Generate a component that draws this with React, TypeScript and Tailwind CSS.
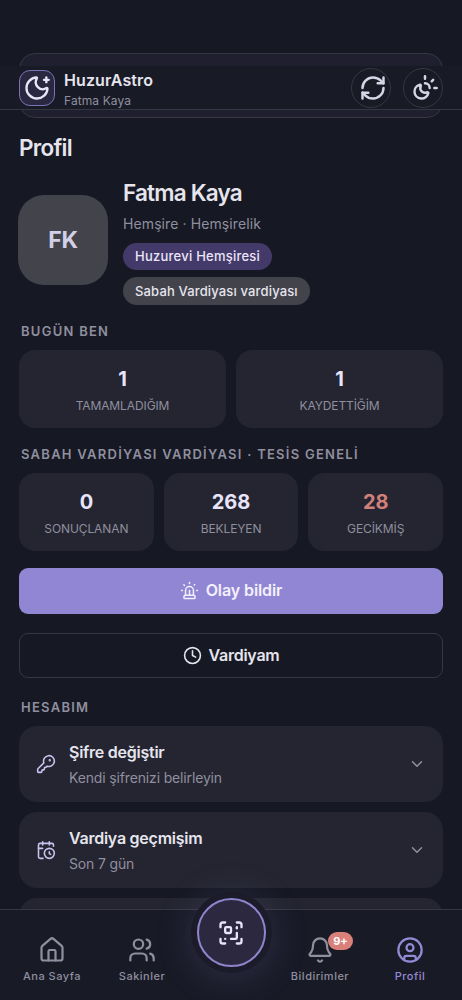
import type { LucideIcon } from "lucide-react";
import {
  Bell,
  CalendarClock,
  ChevronDown,
  CircleUser,
  Clock,
  House,
  KeyRound,
  MoonStar,
  RefreshCw,
  ScanQrCode,
  Siren,
  SunMoon,
  Users,
} from "lucide-react";

const todayStats = [
  { value: "1", label: "TAMAMLADIĞIM" },
  { value: "1", label: "KAYDETTİĞİM" },
];

const shiftStats = [
  { value: "0", label: "SONUÇLANAN" },
  { value: "268", label: "BEKLEYEN" },
  { value: "28", label: "GECİKMİŞ", late: true },
];

const accountItems = [
  { icon: KeyRound, title: "Şifre değiştir", text: "Kendi şifrenizi belirleyin" },
  { icon: CalendarClock, title: "Vardiya geçmişim", text: "Son 7 gün" },
];

const SectionTitle = ({ children }: { children: string }) => (
  <h3 className="pl-[2px] text-[13px] leading-4 font-semibold tracking-[1.26px] text-[#908f9f] whitespace-nowrap">
    {children}
  </h3>
);

const StatCard = ({ value, label, late }: { value: string; label: string; late?: boolean }) => (
  <div className="flex h-[78px] flex-col items-center rounded-2xl bg-[#242530] pt-[15px]">
    <span
      className={
        late
          ? "text-[20px] leading-7 font-bold tracking-[-0.1px] text-[#d17f7b]"
          : "text-[20px] leading-7 font-bold tracking-[-0.1px] text-[#e8e4fa]"
      }
    >
      {value}
    </span>
    <span className="mt-[5px] text-[12px] leading-4 tracking-[-0.1px] text-[#908f9f]">{label}</span>
  </div>
);

const NavItem = ({ icon: Icon, label, badge, active }: { icon: LucideIcon; label: string; badge?: string; active?: boolean }) => (
  <a className={active ? "flex flex-col items-center text-[#958ad5]" : "flex flex-col items-center text-[#908f9f]"}>
    <span className="relative">
      <Icon size={28} strokeWidth={1.9} />
      {badge && (
        <span className="absolute -top-[4px] left-[22px] flex h-[18px] w-[25px] items-center justify-center rounded-full bg-[#d9807b] text-[11px] font-bold text-white">
          {badge}
        </span>
      )}
    </span>
    <span className="mt-[4px] text-[11px] leading-4 font-medium tracking-[0.5px] whitespace-nowrap">{label}</span>
  </a>
);

const Header = () => (
  <header className="absolute inset-x-0 top-[66px] flex h-[44px] items-center border-b border-[#363743] bg-[#181a26] px-[19px]">
    <div className="flex size-[36px] items-center justify-center rounded-[11px] border border-[#7c73b5] bg-[#2a2840] text-[#e8e4fa]">
      <MoonStar size={28} strokeWidth={2} />
    </div>
    <div className="ml-[9px] flex flex-col pt-[5px]">
      <span className="text-[16px] leading-[21px] font-semibold tracking-[0.1px] text-[#e6e5ee]">HuzurAstro</span>
      <span className="text-[12px] leading-[19px] tracking-[0.1px] text-[#908f9f]">Fatma Kaya</span>
    </div>
    <div className="ml-auto flex gap-[12px] text-[#d4d6e6]">
      <button className="flex size-[40px] items-center justify-center rounded-full border border-[#363743] pl-[4px]">
        <RefreshCw size={28} strokeWidth={2.1} />
      </button>
      <button className="flex size-[40px] items-center justify-center rounded-full border border-[#363743] pl-[4px]">
        <SunMoon size={28} strokeWidth={2.1} />
      </button>
    </div>
  </header>
);

const BottomNav = () => (
  <nav className="absolute inset-x-0 bottom-0 grid h-[91px] grid-cols-[104px_76px_102px_76px_104px] border-t border-[#363743] bg-[#181a26] pt-[26px]">
    <NavItem icon={House} label="Ana Sayfa" />
    <NavItem icon={Users} label="Sakinler" />
    <div className="flex justify-center">
      <button className="-mt-[38px] flex size-[69px] items-center justify-center rounded-full border-2 border-[#8f85cd] bg-[#2b283f] text-[#e8e4fa] shadow-[0_0_0_6px_#1b1b29,0_4px_36px_8px_rgba(143,133,205,0.18)]">
        <ScanQrCode size={28} />
      </button>
    </div>
    <NavItem icon={Bell} label="Bildirimler" badge="9+" />
    <NavItem icon={CircleUser} label="Profil" active />
  </nav>
);

const App = () => {
  return (
    <div className="relative h-[1000px] w-[462px] overflow-hidden bg-[#161823] font-['Inter',sans-serif] text-[#e6e5ee]">
      <main className="px-[19px] pt-[53px]">
        <div className="h-[65px] rounded-2xl border border-[#363743] bg-[#201f30]" />

        <h1 className="mt-[15px] text-[22.5px] leading-[30px] font-semibold tracking-[-0.75px]">Profil</h1>

        {/* Kimlik */}
        <section className="mt-[15px] flex items-start gap-[15px]">
          <div className="mt-[17px] -ml-px flex size-[90px] items-center justify-center rounded-[26px] bg-[#42434b] text-[23px] font-bold tracking-[-0.3px] text-[#d2d0e6]">
            FK
          </div>
          <div className="flex flex-col items-start">
            <h2 className="text-[22.5px] leading-[30px] font-semibold tracking-[-0.8px]">Fatma Kaya</h2>
            <p className="mt-[6px] text-[14px] leading-5 tracking-[0.1px] text-[#908f9f]">Hemşire · Hemşirelik</p>
            <span className="mt-[9px] flex h-[27px] items-center rounded-full bg-[#443a69] px-[12px] text-[13px] font-medium tracking-[0.24px] text-[#ebe6fb]">
              Huzurevi Hemşiresi
            </span>
            <span className="mt-[7px] flex h-[28px] items-center rounded-full bg-[#42434b] px-[12px] pt-px text-[13px] font-medium tracking-[0.15px]">
              Sabah Vardiyası vardiyası
            </span>
          </div>
        </section>

        <section className="mt-[18px]">
          <SectionTitle>BUGÜN BEN</SectionTitle>
          <div className="mt-[10.5px] grid grid-cols-2 gap-[10px]">
            {todayStats.map((stat) => (
              <StatCard key={stat.label} {...stat} />
            ))}
          </div>
        </section>

        <section className="mt-[18.5px]">
          <SectionTitle>SABAH VARDİYASI VARDİYASI · TESİS GENELİ</SectionTitle>
          <div className="mt-[10.5px] grid grid-cols-3 gap-[10px]">
            {shiftStats.map((stat) => (
              <StatCard key={stat.label} {...stat} />
            ))}
          </div>
        </section>

        <button className="mt-[17px] flex h-[46px] w-full items-center justify-center gap-[7px] rounded-[9px] bg-[#9186d3] pb-px text-[16px] font-semibold tracking-[-0.1px] text-[#f3f0fd]">
          <Siren size={19} strokeWidth={1.9} />
          Olay bildir
        </button>
        <button className="mt-[19px] flex h-[45px] w-full items-center justify-center gap-[7px] rounded-[9px] border border-[#363743] text-[16px] font-semibold tracking-[-0.25px]">
          <Clock size={19} />
          Vardiyam
        </button>

        <section className="mt-[21.5px]">
          <SectionTitle>HESABIM</SectionTitle>
          <div className="mt-[10.5px] flex flex-col gap-[9.5px]">
            {accountItems.map(({ icon: Icon, title, text }) => (
              <div key={title} className="flex h-[76.5px] items-center rounded-[18px] bg-[#242530] px-[17px]">
                <Icon size={20} strokeWidth={1.9} className="text-[#c9c2ee]" />
                <div className="ml-[13px] flex flex-col pt-[2px]">
                  <span className="text-[16px] leading-[22px] font-semibold tracking-[-0.25px]">{title}</span>
                  <span className="mt-[5px] text-[14px] leading-5 tracking-[-0.15px] text-[#908f9f]">{text}</span>
                </div>
                <ChevronDown size={18} className="ml-auto text-[#908f9f]" />
              </div>
            ))}
            <div className="h-[76.5px] rounded-[18px] bg-[#242530]" />
          </div>
        </section>
      </main>

      <Header />
      <BottomNav />
    </div>
  );
};

export default App;
